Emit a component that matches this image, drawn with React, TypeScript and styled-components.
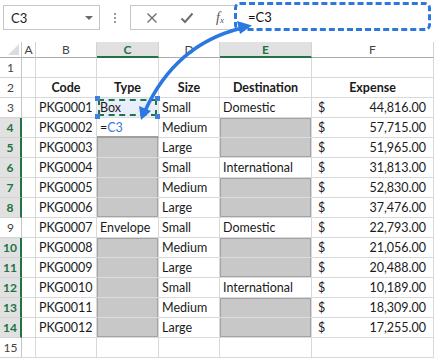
import React from "react";
import styled, { createGlobalStyle, css } from "styled-components";

const GlobalStyle = createGlobalStyle`
  html, body {
    margin: 0;
    padding: 0;
    background: #ffffff;
  }
  body {
    font-family: "Lato", "Open Sans", sans-serif;
    color: #1a1a1a;
  }
`;

const Page = styled.div`
  position: relative;
  width: 434px;
  height: 359px;
  overflow: hidden;
  background: #ffffff;
`;

const FormulaBar = styled.div`
  height: 42px;
  display: flex;
  align-items: flex-start;
  padding: 5px 3px 0 3px;
  box-sizing: border-box;
`;

const NameBox = styled.div`
  width: 97px;
  height: 25px;
  box-sizing: border-box;
  border: 1px solid #c6c6c6;
  display: flex;
  align-items: center;
  justify-content: space-between;
  padding: 0 6px 0 7px;
  font-size: 13px;
  color: #222;
`;

const Caret = styled.span`
  width: 0;
  height: 0;
  border-left: 4px solid transparent;
  border-right: 4px solid transparent;
  border-top: 4px solid #6b6b6b;
`;

const Dots = styled.div`
  width: 30px;
  height: 25px;
  display: flex;
  flex-direction: column;
  align-items: center;
  justify-content: center;
  gap: 2px;

  span {
    width: 2px;
    height: 2px;
    background: #9a9a9a;
  }
`;

const ButtonGroup = styled.div`
  width: 110px;
  height: 25px;
  box-sizing: border-box;
  border: 1px solid #c6c6c6;
  display: flex;
  align-items: center;
  justify-content: space-around;
  padding: 0 4px;
  color: #6f6f6f;
`;

const Fx = styled.span`
  font-family: "Liberation Serif", serif;
  font-style: italic;
  font-size: 14px;
  color: #555;

  sub {
    font-size: 9px;
    vertical-align: -1px;
  }
`;

const FormulaInput = styled.div`
  flex: 1;
  margin-left: -6px;
  margin-top: -3px;
  height: 29px;
  box-sizing: border-box;
  border: 3px dashed #2b78e0;
  border-radius: 6px;
  background: #ffffff;
  display: flex;
  align-items: center;
  padding-left: 11px;
  font-size: 13px;
  color: #111;
`;

const Sheet = styled.div`
  display: grid;
  grid-template-columns: 22px 14px 61px 62px 61px 92px 122px;
  grid-template-rows: 16px repeat(15, 20px);
  font-size: 12.5px;
`;

const Corner = styled.div`
  position: relative;
  box-sizing: border-box;
  border-right: 1px solid #c6c6c6;
  border-bottom: 1px solid #ababab;

  &::after {
    content: "";
    position: absolute;
    right: 2px;
    bottom: 2px;
    width: 0;
    height: 0;
    border-left: 11px solid transparent;
    border-bottom: 11px solid #dcdcdc;
  }
`;

const ColHeader = styled.div<{ $active?: boolean }>`
  box-sizing: border-box;
  display: flex;
  align-items: center;
  justify-content: center;
  border-right: 1px solid #d4d4d4;
  border-bottom: 1px solid #ababab;
  color: #444;
  font-size: 12px;
  ${(p) =>
    p.$active &&
    css`
      background: #e1e1e1;
      border-bottom: 2px solid #217346;
      color: #217346;
      font-weight: 700;
    `}
`;

const RowHeader = styled.div<{ $active?: boolean }>`
  box-sizing: border-box;
  display: flex;
  align-items: center;
  justify-content: center;
  border-right: 1px solid #c6c6c6;
  border-bottom: 1px solid #d4d4d4;
  color: #444;
  font-size: 12px;
  ${(p) =>
    p.$active &&
    css`
      background: #e1e1e1;
      border-right: 2px solid #217346;
      color: #217346;
      font-weight: 700;
    `}
`;

const Cell = styled.div<{
  $gray?: boolean;
  $top?: boolean;
  $bottom?: boolean;
  $bold?: boolean;
  $center?: boolean;
}>`
  box-sizing: border-box;
  display: flex;
  align-items: center;
  padding: 0 3px;
  border-right: 1px solid #d9d9d9;
  border-bottom: 1px solid #d9d9d9;
  white-space: nowrap;
  overflow: visible;
  font-weight: ${(p) => (p.$bold ? 700 : 400)};
  justify-content: ${(p) => (p.$center ? "center" : "flex-start")};
  ${(p) =>
    p.$gray &&
    css`
      background: #c8c8c8;
      border-bottom: 1px solid #dcdcdc;
      box-shadow: inset 1px 0 #a3a3a3, inset -1px 0 #a3a3a3
        ${p.$top ? ", inset 0 1px #a3a3a3" : ""}
        ${p.$bottom ? ", inset 0 -1px #a3a3a3" : ""};
    `}
`;

const RefCell = styled(Cell)`
  position: relative;
  background: #e8eefa;

  &::after {
    content: "";
    position: absolute;
    inset: 1px;
    border: 2px dashed #217346;
  }
`;

const Handle = styled.span<{ $x: "l" | "r"; $y: "t" | "b" }>`
  position: absolute;
  width: 5px;
  height: 5px;
  background: #3d7fe3;
  z-index: 2;
  ${(p) => (p.$x === "l" ? "left: -2px;" : "right: -2px;")}
  ${(p) => (p.$y === "t" ? "top: -2px;" : "bottom: -2px;")}
`;

const ActiveCell = styled(Cell)`
  border-bottom: 2px solid #9e9e9e;
`;

const RefText = styled.span`
  color: #3c78d8;
`;

const Money = styled(Cell)`
  justify-content: space-between;
  padding: 0 7px 0 6px;
`;

const ArrowLayer = styled.svg`
  position: absolute;
  left: 0;
  top: 0;
  pointer-events: none;
`;

type Kind = "gray" | "text";

interface Row {
  code?: string;
  type?: string | null;
  size?: string;
  dest?: string | null;
  expense?: string;
}

const rows: Row[] = [
  {},
  {},
  { code: "PKG0001", type: "Box", size: "Small", dest: "Domestic", expense: "44,816.00" },
  { code: "PKG0002", type: "=", size: "Medium", dest: null, expense: "57,715.00" },
  { code: "PKG0003", type: null, size: "Large", dest: null, expense: "51,965.00" },
  { code: "PKG0004", type: null, size: "Small", dest: "International", expense: "31,813.00" },
  { code: "PKG0005", type: null, size: "Medium", dest: null, expense: "52,830.00" },
  { code: "PKG0006", type: null, size: "Large", dest: null, expense: "37,476.00" },
  { code: "PKG0007", type: "Envelope", size: "Small", dest: "Domestic", expense: "22,793.00" },
  { code: "PKG0008", type: null, size: "Medium", dest: null, expense: "21,056.00" },
  { code: "PKG0009", type: null, size: "Large", dest: null, expense: "20,488.00" },
  { code: "PKG0010", type: null, size: "Small", dest: "International", expense: "10,189.00" },
  { code: "PKG0011", type: null, size: "Medium", dest: null, expense: "18,309.00" },
  { code: "PKG0012", type: null, size: "Large", dest: null, expense: "17,255.00" },
  {},
];

const activeRows = [4, 5, 6, 7, 8, 10, 11, 12, 13, 14];

const isGray = (col: "type" | "dest", i: number) =>
  i >= 2 && i <= 13 && rows[i][col] === null;

const grayEdge = (col: "type" | "dest", i: number) => ({
  $top: !isGray(col, i - 1) && !(col === "type" && i - 1 === 3),
  $bottom: !isGray(col, i + 1),
});

export default function App() {
  return (
    <Page>
      <GlobalStyle />
      <FormulaBar>
        <NameBox>
          C3
          <Caret />
        </NameBox>
        <Dots>
          <span />
          <span />
          <span />
        </Dots>
        <ButtonGroup>
          <svg width="12" height="12" viewBox="0 0 12 12">
            <path d="M1.5 1.5 L10.5 10.5 M10.5 1.5 L1.5 10.5" stroke="#6f6f6f" strokeWidth="1.4" />
          </svg>
          <svg width="14" height="12" viewBox="0 0 14 12">
            <path d="M1.5 6.5 L5 10 L12.5 1.5" stroke="#6f6f6f" strokeWidth="2" fill="none" />
          </svg>
          <Fx>
            f<sub>x</sub>
          </Fx>
        </ButtonGroup>
        <FormulaInput>=C3</FormulaInput>
      </FormulaBar>

      <Sheet>
        <Corner />
        {["A", "B", "C", "D", "E", "F"].map((c) => (
          <ColHeader key={c} $active={c === "C" || c === "E"}>
            {c}
          </ColHeader>
        ))}

        {rows.map((r, i) => {
          const n = i + 1;
          const header = n === 2;
          return (
            <React.Fragment key={n}>
              <RowHeader $active={activeRows.includes(n)}>{n}</RowHeader>
              <Cell />
              {header ? (
                <>
                  <Cell $bold $center>Code</Cell>
                  <Cell $bold $center>Type</Cell>
                  <Cell $bold $center>Size</Cell>
                  <Cell $bold $center>Destination</Cell>
                  <Cell $bold $center>Expense</Cell>
                </>
              ) : (
                <>
                  <Cell>{r.code}</Cell>
                  {n === 3 ? (
                    <RefCell>
                      {r.type}
                      <Handle $x="l" $y="t" />
                      <Handle $x="r" $y="t" />
                      <Handle $x="l" $y="b" />
                      <Handle $x="r" $y="b" />
                    </RefCell>
                  ) : n === 4 ? (
                    <ActiveCell>
                      =<RefText>C3</RefText>
                    </ActiveCell>
                  ) : isGray("type", i) ? (
                    <Cell $gray {...grayEdge("type", i)} />
                  ) : (
                    <Cell>{r.type}</Cell>
                  )}
                  <Cell>{r.size}</Cell>
                  {isGray("dest", i) ? (
                    <Cell $gray {...grayEdge("dest", i)} />
                  ) : (
                    <Cell>{r.dest}</Cell>
                  )}
                  {r.expense ? (
                    <Money>
                      <span>$</span>
                      <span>{r.expense}</span>
                    </Money>
                  ) : (
                    <Cell />
                  )}
                </>
              )}
            </React.Fragment>
          );
        })}
      </Sheet>

      <ArrowLayer width="434" height="359" viewBox="0 0 434 359">
        <path
          d="M240 28.5 Q175 45 145 111"
          stroke="#2b78e0"
          strokeWidth="3.5"
          fill="none"
          strokeLinecap="round"
        />
        <polygon points="252,25.5 237,21 240,34" fill="#2b78e0" />
        <polygon points="141,120 139,106 151,111" fill="#2b78e0" />
      </ArrowLayer>
    </Page>
  );
}
